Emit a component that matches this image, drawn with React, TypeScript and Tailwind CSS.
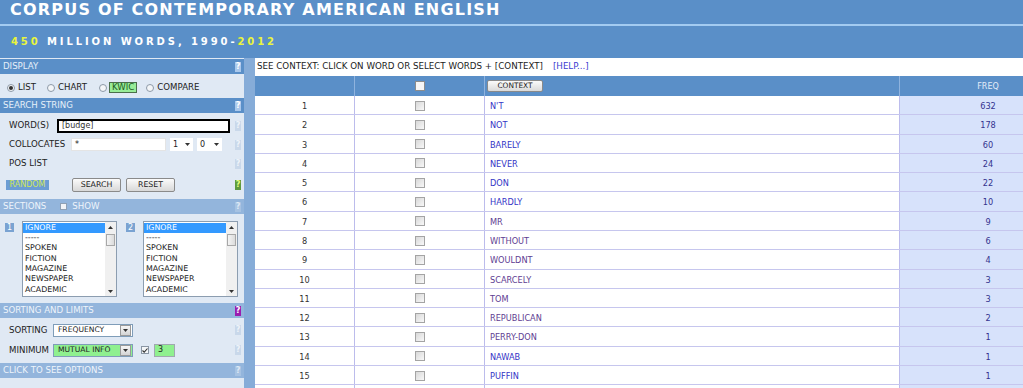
import React from "react";

const rows = [
  { n: 1, w: "N'T", f: 632, v: false },
  { n: 2, w: "NOT", f: 178, v: false },
  { n: 3, w: "BARELY", f: 60, v: false },
  { n: 4, w: "NEVER", f: 24, v: false },
  { n: 5, w: "DON", f: 22, v: false },
  { n: 6, w: "HARDLY", f: 10, v: false },
  { n: 7, w: "MR", f: 9, v: true },
  { n: 8, w: "WITHOUT", f: 6, v: true },
  { n: 9, w: "WOULDNT", f: 4, v: true },
  { n: 10, w: "SCARCELY", f: 3, v: true },
  { n: 11, w: "TOM", f: 3, v: true },
  { n: 12, w: "REPUBLICAN", f: 2, v: true },
  { n: 13, w: "PERRY-DON", f: 1, v: true },
  { n: 14, w: "NAWAB", f: 1, v: false },
  { n: 15, w: "PUFFIN", f: 1, v: false },
];

const sections = ["IGNORE", "-----", "SPOKEN", "FICTION", "MAGAZINE", "NEWSPAPER", "ACADEMIC"];

type Tone = "bar" | "pale" | "faint" | "green" | "purple";

const helpTones: Record<Tone, string> = {
  bar: "bg-[#a9c8ec] text-white",
  pale: "bg-[#c9d8ea] text-[#eef3f9]",
  faint: "bg-[#a6c2e2] text-[#dce8f5]",
  green: "bg-[#5e9a3e] text-[#e6ff7a]",
  purple: "bg-[#9a1cb0] text-white",
};

const Help = ({ tone }: { tone: Tone }) => (
  <span className={`flex h-[10px] w-[6px] items-center justify-center text-[8px] font-bold leading-none ${helpTones[tone]}`}>
    ?
  </span>
);

const Bar = ({ dark, tone, children }: { dark?: boolean; tone: Tone; children: React.ReactNode }) => (
  <div
    className={`flex h-[15px] items-center justify-between pl-[3px] pr-[3px] text-[8.6px] ${
      dark ? "bg-[#5a8fc8] text-[#e6eff9]" : "bg-[#93b5dc] text-[#eef4fb]"
    }`}
  >
    <div className="flex items-center">{children}</div>
    <Help tone={tone} />
  </div>
);

const Radio = ({ on }: { on?: boolean }) => (
  <span className="flex h-[8px] w-[8px] items-center justify-center rounded-full border border-[#8d9aa8] bg-[#f4f6f8]">
    {on && <span className="h-[4px] w-[4px] rounded-full bg-[#333]" />}
  </span>
);

const Arrow = ({ up }: { up?: boolean }) => (
  <svg width="5" height="3" viewBox="0 0 5 3">
    <path d={up ? "M0 3 L2.5 0 L5 3 Z" : "M0 0 L5 0 L2.5 3 Z"} fill="#333" />
  </svg>
);

const ListBox = () => (
  <div className="flex h-[76px] w-[95px] border border-[#8c9db0] bg-white">
    <div className="flex-1 pt-[0.5px]">
      {sections.map((t, i) => (
        <div
          key={t + i}
          className={`h-[10.4px] pl-[2px] text-[7.9px] leading-[10.4px] ${
            i === 0 ? "bg-[#3399ff] text-white" : "text-[#222]"
          }`}
        >
          {t}
        </div>
      ))}
    </div>
    <div className="flex w-[11px] flex-col bg-[#f0f0f0]">
      <div className="flex h-[10px] items-center justify-center">
        <Arrow up />
      </div>
      <div className="mx-[1px] mt-[2px] h-[12px] border border-[#a8a8a8] bg-gradient-to-r from-[#f4f4f4] to-[#dcdcdc]" />
      <div className="flex-1" />
      <div className="flex h-[10px] items-center justify-center">
        <Arrow />
      </div>
    </div>
  </div>
);

const Button = ({ label, w }: { label: string; w: string }) => (
  <span
    className={`flex h-[14px] ${w} items-center justify-center rounded-[2px] border border-[#8a8a8a] bg-gradient-to-b from-[#fbfbfb] to-[#d8d8d8] text-[7.8px] text-[#222]`}
  >
    {label}
  </span>
);

const Select = ({ label, green }: { label: string; green?: boolean }) => (
  <div className={`flex h-[13px] w-[80px] items-center border border-[#7f9db9] ${green ? "bg-[#8ff08f]" : "bg-white"}`}>
    <span className="flex-1 pl-[4px] text-[7.6px] text-[#222]">{label}</span>
    <span className="mr-[1px] flex h-[11px] w-[11px] items-center justify-center border border-[#9a9a9a] bg-gradient-to-b from-[#f6f6f6] to-[#d4d4d4]">
      <Arrow />
    </span>
  </div>
);

const Check = ({ header }: { header?: boolean }) => (
  <span
    className={`h-[10px] w-[10px] border ${
      header ? "border-[#8c8c8c] bg-[#f6f6f6]" : "border-[#a4a4a4] bg-gradient-to-br from-[#d8d8d8] to-[#f8f8f8]"
    }`}
  />
);

export default function App() {
  return (
    <div className="h-[388px] w-[1023px] overflow-hidden bg-[#5a8fc8] font-['DejaVu_Sans',sans-serif]">
      {/* Header */}
      <div className="h-[58px]">
        <div className="h-[24px] pl-[10px] pt-[1px] text-[16px] font-bold leading-[18px] tracking-[1.2px] text-white">
          CORPUS OF CONTEMPORARY AMERICAN ENGLISH
        </div>
        <div className="h-[2px] bg-[#a3cbf1]" />
        <div className="mt-[10px] pl-[11px] text-[10px] font-bold leading-[12px] tracking-[2.9px] text-white">
          <span className="text-[#e9f53c]">450</span> MILLION WORDS, 1990-<span className="text-[#e9f53c]">2012</span>
        </div>
      </div>

      <div className="flex h-[330px]">
        {/* Left panel */}
        <div className="w-[244px] shrink-0 bg-[#e0e9f4] pt-[1px] text-[8.6px] text-[#222]">
          <Bar dark tone="bar">DISPLAY</Bar>
          <div className="flex h-[24px] items-center pl-[7px] pt-[3px]">
            <Radio on />
            <span className="ml-[3px]">LIST</span>
            <span className="ml-[11px]">
              <Radio />
            </span>
            <span className="ml-[3px]">CHART</span>
            <span className="ml-[12px]">
              <Radio />
            </span>
            <span className="ml-[2px] flex h-[11px] items-center border border-[#4b6f4b] bg-[#98ec98] px-[2px] text-[#1d5a1d]">
              KWIC
            </span>
            <span className="ml-[9px]">
              <Radio />
            </span>
            <span className="ml-[3px]">COMPARE</span>
          </div>
          <Bar dark tone="bar">SEARCH STRING</Bar>

          <div className="pt-[3px]">
            <div className="flex h-[19px] items-center pl-[9px] pr-[3px]">
              <span className="w-[48px]">WORD(S)</span>
              <span className="flex h-[14px] w-[173px] items-center border-2 border-black bg-white pl-[3px] text-[8px] text-[#333]">
                [budge]
              </span>
              <span className="ml-auto">
                <Help tone="pale" />
              </span>
            </div>
            <div className="flex h-[19px] items-center pl-[9px] pr-[3px]">
              <span className="w-[62px]">COLLOCATES</span>
              <span className="flex h-[13px] w-[95px] items-center border border-[#e4e4e4] bg-white pl-[3px] text-[8px]">*</span>
              <span className="ml-[4px] flex h-[13px] w-[23px] items-center justify-between bg-white px-[3px] text-[8px]">
                1 <Arrow />
              </span>
              <span className="ml-[4px] flex h-[13px] w-[25px] items-center justify-between bg-white px-[3px] text-[8px]">
                0 <Arrow />
              </span>
              <span className="ml-auto">
                <Help tone="pale" />
              </span>
            </div>
            <div className="flex h-[19px] items-center pl-[9px] pr-[3px]">
              <span>POS LIST</span>
              <span className="ml-auto">
                <Help tone="pale" />
              </span>
            </div>
            <div className="flex h-[24px] items-center pl-[6px] pr-[3px]">
              <span className="flex h-[10px] w-[43px] items-center justify-center bg-[#6c9dd4] text-[8px] text-[#cfe65a]">
                RANDOM
              </span>
              <span className="ml-[23px]">
                <Button label="SEARCH" w="w-[49px]" />
              </span>
              <span className="ml-[5px]">
                <Button label="RESET" w="w-[49px]" />
              </span>
              <span className="ml-auto">
                <Help tone="green" />
              </span>
            </div>
          </div>

          <div className="mt-[2px]">
            <Bar tone="faint">
              SECTIONS
              <span className="ml-[14px] h-[7px] w-[7px] border border-[#8fa0b4] bg-[#f2f4f7]" />
              <span className="ml-[5px]">SHOW</span>
            </Bar>
          </div>
          <div className="mt-[7px] flex items-start pl-[5px]">
            <span className="mt-[2px] flex h-[9px] w-[9px] items-center justify-center bg-[#7aa3d2] text-[8px] text-white">1</span>
            <span className="ml-[8px]">
              <ListBox />
            </span>
            <span className="ml-[9px] mt-[2px] flex h-[9px] w-[9px] items-center justify-center bg-[#7aa3d2] text-[8px] text-white">
              2
            </span>
            <span className="ml-[8px]">
              <ListBox />
            </span>
          </div>

          <div className="mt-[6px]">
            <Bar tone="purple">SORTING AND LIMITS</Bar>
          </div>
          <div className="pt-[2px]">
            <div className="flex h-[20px] items-center pl-[9px] pr-[3px]">
              <span className="w-[44px]">SORTING</span>
              <Select label="FREQUENCY" />
              <span className="ml-auto">
                <Help tone="pale" />
              </span>
            </div>
            <div className="flex h-[20px] items-center pl-[9px] pr-[3px]">
              <span className="w-[44px]">MINIMUM</span>
              <Select label="MUTUAL INFO" green />
              <span className="ml-[8px] flex h-[8px] w-[8px] items-center justify-center border border-[#8a96a4] bg-[#f4f6f8]">
                <svg width="6" height="5" viewBox="0 0 6 5">
                  <path d="M0.5 2.5 L2.2 4.2 L5.5 0.5" stroke="#333" strokeWidth="1.1" fill="none" />
                </svg>
              </span>
              <span className="ml-[5px] flex h-[13px] w-[21px] items-center border border-[#a0a8b0] bg-[#8ff08f] pl-[3px] text-[8px]">
                3
              </span>
              <span className="ml-auto">
                <Help tone="pale" />
              </span>
            </div>
          </div>
          <div className="mt-[3px]">
            <Bar tone="faint">CLICK TO SEE OPTIONS</Bar>
          </div>
        </div>

        {/* Divider strip */}
        <div className="w-[11px] shrink-0 bg-[#86acd8]" />

        {/* Results */}
        <div className="min-w-0 flex-1 overflow-hidden bg-white">
          <div className="flex h-[18px] items-center pl-[2px] text-[8.7px] text-[#222]">
            SEE CONTEXT: CLICK ON WORD OR SELECT WORDS + [CONTEXT]
            <span className="ml-[10px] text-[#3b3bd0]">[HELP...]</span>
          </div>

          <div className="flex h-[20px] bg-[#5a8fc8] text-[8px] text-[#e2ecf8]">
            <div className="w-[100px] shrink-0 border-r border-[#8fb3de]" />
            <div className="flex w-[130px] shrink-0 items-center justify-center border-r border-[#8fb3de]">
              <Check header />
            </div>
            <div className="flex w-[415px] shrink-0 items-center border-r border-[#8fb3de] pl-[2px]">
              <span className="flex h-[12px] w-[56px] items-center justify-center rounded-[2px] border border-[#8a8a8a] bg-gradient-to-b from-[#fbfbfb] to-[#dadada] text-[7.4px] text-[#222]">
                CONTEXT
              </span>
            </div>
            <div className="flex w-[176px] shrink-0 items-center justify-center pt-[1px]">FREQ</div>
          </div>

          {[...rows, { n: 0, w: "", f: 0, v: false }].map((r, i) => (
            <div key={i} className="flex h-[19.29px] border-b border-[#c6c6ee] text-[8.2px]">
              <div className="flex w-[100px] shrink-0 items-center justify-center border-r border-[#bcbcec] pt-[2px] text-[#333]">
                {r.n > 0 ? r.n : ""}
              </div>
              <div className="flex w-[130px] shrink-0 items-center justify-center border-r border-[#bcbcec] pt-[1px]">
                {r.n > 0 && <Check />}
              </div>
              <div
                className={`flex w-[415px] shrink-0 items-center border-r border-[#bcbcec] pl-[5px] pt-[2px] ${
                  r.v ? "text-[#5e3d92]" : "text-[#3434c6]"
                }`}
              >
                {r.w}
              </div>
              <div className="flex w-[176px] shrink-0 items-center justify-center bg-[#d7e2fb] pt-[2px] text-[#33338f]">
                {r.n > 0 ? r.f : ""}
              </div>
            </div>
          ))}
        </div>
      </div>
    </div>
  );
}
